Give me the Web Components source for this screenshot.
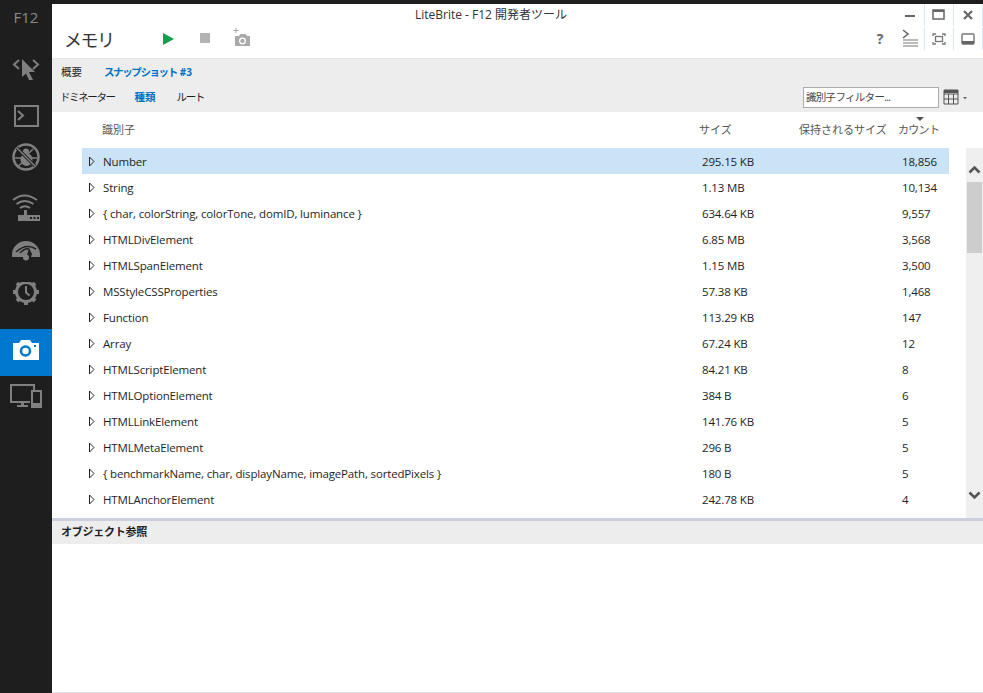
<!DOCTYPE html>
<html lang="ja">
<head>
<meta charset="utf-8">
<title>F12</title>
<style>
  html, body { margin:0; height:100%; overflow:hidden; background:#fff; }
</style>
</head>
<body>
<f12-app>
  <f12-sidebar slot="side">
    <side-btn>
      <svg viewBox="0 0 52 47" width="52" height="47"><path d="M19 13l-5 4.500 5 4.500M33 13l5 4.500-5 4.500" fill="none" stroke="#808080" stroke-width="2"/><path d="M22 12l13 13h-6l4 8h-4l-3-6.500-4 3.500z" fill="#808080"/></svg>
    </side-btn>
    <side-btn>
      <svg viewBox="0 0 52 47" width="52" height="47"><rect x="15" y="12" width="23" height="20" fill="none" stroke="#808080" stroke-width="2"/><path d="M18 17l5 4.500-5 4.500" fill="none" stroke="#808080" stroke-width="2"/></svg>
    </side-btn>
    <side-btn>
      <svg viewBox="0 0 52 47" width="52" height="47"><circle cx="26" cy="16" r="12.500" fill="none" stroke="#808080" stroke-width="2.500"/><ellipse cx="26.500" cy="18.500" rx="6" ry="6.500" fill="#808080"/><circle cx="26" cy="10.500" r="3" fill="#808080"/><path d="M19 8l4 4M33 8l-4 4M15 17h7M37 17h-7M17 26l5-4M35 26l-5-4" stroke="#808080" stroke-width="1.500"/><path d="M17 7l18 18" stroke="#1e1e1e" stroke-width="3.200"/><path d="M17 7l18 18" stroke="#808080" stroke-width="1.500"/></svg>
    </side-btn>
    <side-btn>
      <svg viewBox="0 0 52 47" width="52" height="47"><path d="M13 12q11-9 24 0M16.500 16q8-6 17 0M20 20q5-3.500 10 0" fill="none" stroke="#808080" stroke-width="2"/><path d="M24 22h3v6h-3z" fill="#808080"/><rect x="18" y="27" width="22" height="6" fill="#808080"/><path d="M30 29h2v2h-2zM33.500 29h2v2h-2zM37 29h2v2h-2z" fill="#1e1e1e"/></svg>
    </side-btn>
    <side-btn>
      <svg viewBox="0 0 52 47" width="52" height="47"><path d="M12 20a14 14 0 0 1 28 0v2H31l1-3-3-6-2 7a3 3 0 0 0-2 2H12z" fill="#808080"/><path d="M16 17q10-9 20-3M20 18q5-5 9-4" fill="none" stroke="#1e1e1e" stroke-width="1.500"/><circle cx="26" cy="22.500" r="3" fill="#808080"/></svg>
    </side-btn>
    <side-btn>
      <svg viewBox="0 0 52 47" width="52" height="47"><circle cx="26" cy="10" r="9.500" fill="none" stroke="#808080" stroke-width="3"/><path d="M26-3v5M26 18v5M13 10h5M34 10h5M17 1l3 3M32 16l3 3M35 1l-3 3M20 16l-3 3" stroke="#808080" stroke-width="4"/><path d="M26 4v6.500l3.500 3" fill="none" stroke="#808080" stroke-width="2"/></svg>
    </side-btn>
    <side-btn active>
      <svg viewBox="0 0 52 47" width="52" height="47"><path d="M13 14h6l2-3h9l2 3h7v17H13z" fill="#fff"/><circle cx="25.500" cy="22" r="4.500" fill="none" stroke="#0078d0" stroke-width="2.500"/><rect x="34" y="16" width="2" height="2" fill="#0078d0"/></svg>
    </side-btn>
    <side-btn>
      <svg viewBox="0 0 52 47" width="52" height="47"><path d="M30 26H11V9h23v6" fill="none" stroke="#808080" stroke-width="2"/><path d="M21 26h3v3h4v2H17v-2h4z" fill="#808080"/><rect x="31" y="14" width="11" height="18" fill="#808080"/><rect x="33" y="16" width="7" height="11" fill="#1e1e1e"/></svg>
    </side-btn>
  </f12-sidebar>

  <f12-header slot="main"></f12-header>
  <memory-tabs slot="main"></memory-tabs>
  <type-table slot="main">
    <type-row selected name="Number" size="295.15 KB" count="18,856"></type-row>
    <type-row name="String" size="1.13 MB" count="10,134"></type-row>
    <type-row name="{ char, colorString, colorTone, domID, luminance }" size="634.64 KB" count="9,557"></type-row>
    <type-row name="HTMLDivElement" size="6.85 MB" count="3,568"></type-row>
    <type-row name="HTMLSpanElement" size="1.15 MB" count="3,500"></type-row>
    <type-row name="MSStyleCSSProperties" size="57.38 KB" count="1,468"></type-row>
    <type-row name="Function" size="113.29 KB" count="147"></type-row>
    <type-row name="Array" size="67.24 KB" count="12"></type-row>
    <type-row name="HTMLScriptElement" size="84.21 KB" count="8"></type-row>
    <type-row name="HTMLOptionElement" size="384 B" count="6"></type-row>
    <type-row name="HTMLLinkElement" size="141.76 KB" count="5"></type-row>
    <type-row name="HTMLMetaElement" size="296 B" count="5"></type-row>
    <type-row name="{ benchmarkName, char, displayName, imagePath, sortedPixels }" size="180 B" count="5"></type-row>
    <type-row name="HTMLAnchorElement" size="242.78 KB" count="4"></type-row>
  </type-table>
  <object-refs slot="main"></object-refs>
</f12-app>

<script>
const FONT = '"Open Sans","Noto Sans CJK JP",sans-serif';

class F12App extends HTMLElement {
  constructor() {
    super();
    this.attachShadow({ mode: 'open' }).innerHTML = `
      <style>
        :host{
          display:flex; flex-direction:column; width:983px; height:693px;
          background:#1e1e1e; color:#1e1e1e;
          font:11.5px/16px ${FONT}; letter-spacing:-.15px;
        }
        .body{ flex:1; display:flex; min-height:0; padding-top:4px; }
        .main{ flex:1; min-width:0; display:flex; flex-direction:column; background:#fff; }
      </style>
      <div class="body">
        <slot name="side"></slot>
        <div class="main"><slot name="main"></slot></div>
      </div>`;
  }
}

class F12Sidebar extends HTMLElement {
  constructor() {
    super();
    this.attachShadow({ mode: 'open' }).innerHTML = `
      <style>
        :host{ display:flex; flex-direction:column; width:52px; background:#1e1e1e; flex:none; }
        .brand{
          height:43px; padding-top:4px; box-sizing:border-box; text-align:center;
          color:#8a8a8a; font-size:15px; line-height:18px; letter-spacing:0;
        }
      </style>
      <div class="brand">F12</div>
      <slot></slot>`;
  }
}

class SideBtn extends HTMLElement {
  constructor() {
    super();
    this.attachShadow({ mode: 'open' }).innerHTML = `
      <style>
        :host{ display:block; width:52px; height:47px; line-height:0; }
        :host([active]){ background:#0078d0; }
      </style>
      <slot></slot>`;
  }
}

class F12Header extends HTMLElement {
  constructor() {
    super();
    const cell = svg => `<div class="cell">${svg}</div>`;
    this.attachShadow({ mode: 'open' }).innerHTML = `
      <style>
        :host{ display:block; height:54px; border-bottom:1px solid #e4e4ec; flex:none; }
        .top{ display:flex; height:22px; }
        .title{
          flex:1; padding-left:34px; text-align:center; line-height:22px; color:#333;
          font-size:12px; letter-spacing:0;
        }
        .cells{ display:flex; }
        .cell{
          width:29px; height:22px; display:flex; align-items:center; justify-content:center;
          box-sizing:border-box; border-right:1px solid #dce8f2;
        }
        .bottom{ display:flex; align-items:flex-start; height:32px; }
        .name{ font-size:18px; line-height:26px; margin:1px 0 0 12px; width:99px; color:#333; letter-spacing:-1.500px; }
        .tools{ display:flex; align-items:center; height:26px; }
        .grow{ flex:1; }
        .cells.low{ margin-top:2px; }
        .help{ width:14px; margin:2px 9px 0 0; font-weight:700; color:#666; font-size:14px; line-height:22px; text-align:center; }
        svg{ display:block; }
      </style>
      <div class="top">
        <div class="title">LiteBrite - F12 開発者ツール</div>
        <div class="cells">
          ${cell('<svg width="12" height="12"><rect x="1" y="6" width="10" height="2" fill="#666"/></svg>')}
          ${cell('<svg width="14" height="12"><rect x="1" y="1" width="11" height="9" fill="none" stroke="#666" stroke-width="1.500"/><rect x="1" y="1" width="11" height="2" fill="#666"/></svg>')}
          ${cell('<svg width="12" height="12"><path d="M2 2l8 8M10 2l-8 8" stroke="#666" stroke-width="2.200"/></svg>')}
        </div>
      </div>
      <div class="bottom">
        <div class="name">メモリ</div>
        <div class="tools">
          <svg width="37" height="16" viewBox="0 0 37 16"><path d="M0 2l11 6-11 6z" fill="#10a14c"/></svg>
          <svg width="33" height="16" viewBox="0 0 33 16"><rect x="0" y="2" width="10" height="10" fill="#b3b3b3"/></svg>
          <svg width="18" height="20" viewBox="0 0 18 20" style="margin-top:-2px"><path d="M3 0v5M.5 2.500h5" stroke="#aaa" stroke-width="1"/><path d="M2 8h4l1.500-2h5L14 8h3v10H2z" fill="#aaa"/><circle cx="9.500" cy="13" r="2.800" fill="none" stroke="#fff" stroke-width="1.300"/></svg>
        </div>
        <div class="grow"></div>
        <div class="help">?</div>
        <div class="cells low">
          ${cell('<svg width="19" height="22" viewBox="0 0 19 22"><path d="M2 2l5 4-5 4" fill="none" stroke="#666" stroke-width="1.600"/><path d="M2 12h15M2 15h15M2 18h15" stroke="#777" stroke-width="1.200"/></svg>')}
          ${cell('<svg width="14" height="12" viewBox="0 0 14 12"><path d="M1 3V1h3M10 1h3v2M13 9v2h-3M4 11H1V9" fill="none" stroke="#777" stroke-width="1.300"/><rect x="3.500" y="3.500" width="7" height="5" fill="none" stroke="#777" stroke-width="1.300"/></svg>')}
          ${cell('<svg width="14" height="12" viewBox="0 0 14 12"><rect x="1" y="1" width="12" height="10" fill="none" stroke="#777" stroke-width="1.400" rx="1"/><rect x="1" y="8" width="12" height="3" fill="#666"/></svg>')}
        </div>
      </div>`;
  }
}

class MemoryTabs extends HTMLElement {
  constructor() {
    super();
    this.attachShadow({ mode: 'open' }).innerHTML = `
      <style>
        :host{ display:block; height:53px; background:#ededed; flex:none; font-size:10.500px; letter-spacing:0; }
        .row{ display:flex; align-items:center; }
        .one{ height:25px; padding-left:9px; }
        .two{ height:26px; padding:0 0 2px 8px; }
        .on{ color:#0072c6; font-weight:700; }
        .kana{ letter-spacing:-1.400px; }
        .one .on{ margin-left:22px; }
        .two .on{ margin-left:20px; }
        .two .last{ margin-left:21px; }
        .num{ color:#0072c6; font-weight:700; margin-left:3px; font-size:10px; }
        .grow{ flex:1; }
        input{
          width:136px; height:21px; box-sizing:border-box; margin:0 4px 0 0; padding:0 2px;
          border:1px solid #ababab; background:#fff; font:10.500px ${FONT}; color:#333; outline:0;
          letter-spacing:-.7px;
        }
        input::placeholder{ color:#444; opacity:1; }
        svg{ display:block; margin-right:14px; }
      </style>
      <div class="row one"><span>概要</span><span class="on kana">スナップショット</span><span class="num">#3</span></div>
      <div class="row two">
        <span class="kana">ドミネーター</span><span class="on">種類</span><span class="last kana">ルート</span>
        <span class="grow"></span>
        <input placeholder="識別子フィルター...">
        <svg width="26" height="16" viewBox="0 0 26 16"><path d="M1 1h14v14H1zM1 5h14M1 10h14M5.500 5v10M10.500 5v10" fill="none" stroke="#555" stroke-width="1"/><rect x="1" y="1" width="14" height="3" fill="#555"/><path d="M20 8h4l-2 2.500z" fill="#666"/></svg>
      </div>`;
  }
}

class TypeTable extends HTMLElement {
  constructor() {
    super();
    this.attachShadow({ mode: 'open' }).innerHTML = `
      <style>
        :host{ flex:1; min-height:0; display:flex; flex-direction:column; }
        .head{
          height:36px; flex:none; display:grid; position:relative; color:#555;
          grid-template-columns:597px 100px 99px 1fr; padding-left:50px; align-items:center;
          font-size:11px; letter-spacing:0;
        }
        .count{ letter-spacing:-.7px; }
        .sort{ position:absolute; left:864px; top:5px; width:0; height:0;
          border:4px solid transparent; border-top-color:#555; border-bottom:0; }
        .body{ flex:1; min-height:0; display:flex; padding-left:30px; }
        .rows{ width:867px; margin-right:17px; overflow:hidden; }
        .bar{ width:17px; background:#efefef; display:flex; flex-direction:column; }
        .up{ height:34px; display:flex; align-items:flex-end; justify-content:center; padding-bottom:8px; box-sizing:border-box; }
        .thumb{ height:71px; background:#cdcdcd; margin:0 1px; }
        .grow{ flex:1; }
        .down{ height:27px; display:flex; align-items:flex-start; justify-content:center; }
        svg{ display:block; }
      </style>
      <div class="head">
        <span>識別子</span><span>サイズ</span><span>保持されるサイズ</span><span class="count">カウント</span>
        <i class="sort"></i>
      </div>
      <div class="body">
        <div class="rows"><slot></slot></div>
        <div class="bar">
          <div class="up"><svg width="13" height="9"><path d="M1.500 7.500l5-5 5 5" fill="none" stroke="#555" stroke-width="2.600"/></svg></div>
          <div class="thumb"></div>
          <div class="grow"></div>
          <div class="down"><svg width="13" height="9"><path d="M1.500 1.500l5 5 5-5" fill="none" stroke="#555" stroke-width="2.600"/></svg></div>
        </div>
      </div>`;
  }
}

class TypeRow extends HTMLElement {
  static get observedAttributes() { return ['name', 'size', 'count']; }

  constructor() {
    super();
    this.attachShadow({ mode: 'open' }).innerHTML = `
      <style>
        :host{
          display:grid; grid-template-columns:21px 599px 200px 1fr; height:26px; align-items:center;
        }
        :host([selected]){ background:#cbe3f6; }
        span{ padding-top:1px; }
        svg{ display:block; margin-left:6px; margin-top:1px; }
      </style>
      <svg width="8" height="11" viewBox="0 0 8 11"><path d="M1.500 1l4.500 4.500-4.500 4.500z" fill="none" stroke="#222" stroke-width="1"/></svg>
      <span class="n"></span><span class="s"></span><span class="c"></span>`;
  }

  connectedCallback() { this._update(); }
  attributeChangedCallback() { this._update(); }

  _update() {
    const r = this.shadowRoot;
    r.querySelector('.n').textContent = this.getAttribute('name') || '';
    r.querySelector('.s').textContent = this.getAttribute('size') || '';
    r.querySelector('.c').textContent = this.getAttribute('count') || '';
  }
}

class ObjectRefs extends HTMLElement {
  constructor() {
    super();
    this.attachShadow({ mode: 'open' }).innerHTML = `
      <style>
        :host{
          display:block; flex:none; height:175px; box-sizing:border-box;
          border-top:3px solid #cccfe0; border-bottom:1px solid #e4e4ec;
        }
        .title{
          height:23px; background:#ededed; line-height:22px; padding-left:9px; font-weight:700; color:#222;
          font-size:11px; letter-spacing:-.25px;
        }
      </style>
      <div class="title">オブジェクト参照</div>`;
  }
}

customElements.define('f12-app', F12App);
customElements.define('f12-sidebar', F12Sidebar);
customElements.define('side-btn', SideBtn);
customElements.define('f12-header', F12Header);
customElements.define('memory-tabs', MemoryTabs);
customElements.define('type-table', TypeTable);
customElements.define('type-row', TypeRow);
customElements.define('object-refs', ObjectRefs);
</script>
</body>
</html>
